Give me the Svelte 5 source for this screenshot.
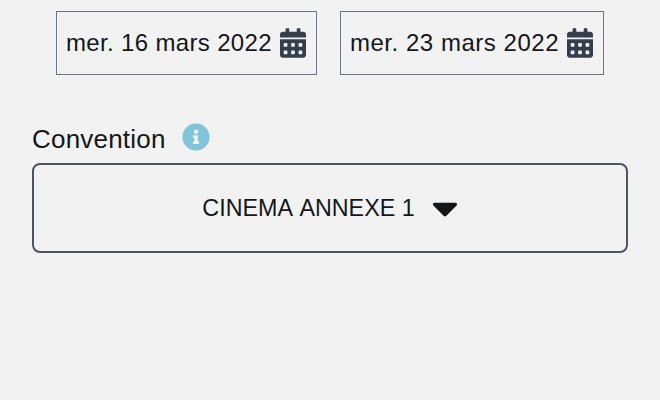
<script lang="ts">
  const dates = ['mer. 16 mars 2022', 'mer. 23 mars 2022'];
  const calendarPath =
    'M0 464c0 26.5 21.5 48 48 48h352c26.5 0 48-21.5 48-48V192H0v272zm320-196c0-6.6 5.4-12 12-12h40c6.6 0 12 5.4 12 12v40c0 6.6-5.4 12-12 12h-40c-6.6 0-12-5.4-12-12v-40zm0 128c0-6.6 5.4-12 12-12h40c6.6 0 12 5.4 12 12v40c0 6.6-5.4 12-12 12h-40c-6.6 0-12-5.4-12-12v-40zM192 268c0-6.6 5.4-12 12-12h40c6.6 0 12 5.4 12 12v40c0 6.6-5.4 12-12 12h-40c-6.6 0-12-5.4-12-12v-40zm0 128c0-6.6 5.4-12 12-12h40c6.6 0 12 5.4 12 12v40c0 6.6-5.4 12-12 12h-40c-6.6 0-12-5.4-12-12v-40zM64 268c0-6.6 5.4-12 12-12h40c6.6 0 12 5.4 12 12v40c0 6.6-5.4 12-12 12H76c-6.6 0-12-5.4-12-12v-40zm0 128c0-6.6 5.4-12 12-12h40c6.6 0 12 5.4 12 12v40c0 6.6-5.4 12-12 12H76c-6.6 0-12-5.4-12-12v-40zM400 64h-48V16c0-8.8-7.2-16-16-16h-32c-8.8 0-16 7.2-16 16v48H160V16c0-8.8-7.2-16-16-16h-32c-8.8 0-16 7.2-16 16v48H48C21.5 64 0 85.5 0 112v48h448v-48c0-26.5-21.5-48-48-48z';
</script>

<main class="page">
  <div class="dates">
    {#each dates as date}
      <div class="date">
        <span>{date}</span>
        <svg class="cal" viewBox="0 0 448 512" aria-hidden="true"><path d={calendarPath} /></svg>
      </div>
    {/each}
  </div>

  <div class="label">
    <span>Convention</span>
    <svg class="info" viewBox="0 0 512 512" aria-hidden="true">
      <path d="M256 8C119.043 8 8 119.083 8 256c0 136.997 111.043 248 248 248s248-111.003 248-248C504 119.083 392.957 8 256 8zm0 110c23.196 0 42 18.804 42 42s-18.804 42-42 42-42-18.804-42-42 18.804-42 42-42zm56 254c0 6.627-5.373 12-12 12h-88c-6.627 0-12-5.373-12-12v-24c0-6.627 5.373-12 12-12h12v-64h-12c-6.627 0-12-5.373-12-12v-24c0-6.627 5.373-12 12-12h64c6.627 0 12 5.373 12 12v100h12c6.627 0 12 5.373 12 12v24z" />
    </svg>
  </div>

  <div class="select">
    <span>CINEMA ANNEXE 1</span>
    <svg class="caret" viewBox="0 0 320 512" aria-hidden="true">
      <path d="M31.3 192h257.3c17.8 0 26.7 21.5 14.1 34.1L174.1 354.8c-7.8 7.8-20.5 7.8-28.3 0L17.2 226.1C4.6 213.5 13.5 192 31.3 192z" />
    </svg>
  </div>
</main>

<style>
  :global(body) {
    background: #f2f2f2;
  }
  .page {
    height: 400px;
    box-sizing: border-box;
    padding: 11px 32px 0;
    font-family: "Liberation Sans", Arial, sans-serif;
    color: #14171a;
  }
  .dates {
    display: flex;
    justify-content: center;
    gap: 23px;
  }
  .date {
    display: flex;
    align-items: center;
    gap: 8px;
    height: 64px;
    box-sizing: border-box;
    padding: 0 10px 0 9px;
    border: 1px solid #6c7582;
    font-size: 24px;
    letter-spacing: 0.35px;
  }
  .date:last-child {
    letter-spacing: 0.53px;
  }
  .cal {
    width: 26px;
    height: 30px;
    fill: #343e4c;
  }
  .label {
    display: flex;
    align-items: center;
    gap: 16px;
    margin-top: 48px;
    height: 32px;
    font-size: 26px;
    letter-spacing: 0.2px;
  }
  .info {
    width: 28px;
    height: 28px;
    margin-top: -4px;
    fill: #7fc4d8;
  }
  .select {
    display: flex;
    align-items: center;
    justify-content: center;
    gap: 17px;
    height: 90px;
    margin-top: 8px;
    box-sizing: border-box;
    border: 2px solid #4b5563;
    border-radius: 8px;
    font-size: 23.3px;
    font-kerning: none;
  }
  .caret {
    width: 26px;
    height: 42px;
    fill: #14171a;
  }
</style>
